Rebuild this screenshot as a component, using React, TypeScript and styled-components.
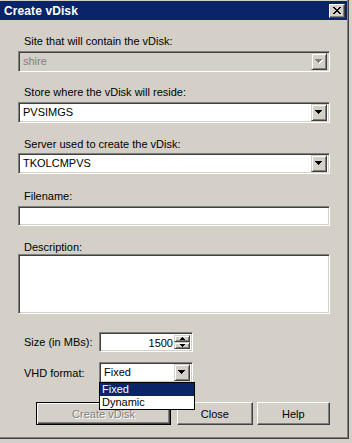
import { FC, ReactNode } from "react";
import styled, { createGlobalStyle, css } from "styled-components";

const face = "#d4d0c8";
const shadow = "#808080";
const dark = "#404040";
const navy = "#0a246a";

const GlobalStyle = createGlobalStyle`
  html, body {
    margin: 0;
    padding: 0;
    background: ${face};
  }

  body {
    font-family: "Liberation Sans", Arial, sans-serif;
    font-size: 11px;
    color: #000;
  }
`;

const raised = css`
  box-sizing: border-box;
  background: ${face};
  border: 1px solid;
  border-color: #fff ${dark} ${dark} #fff;
  box-shadow: inset -1px -1px ${shadow};
`;

const sunken = css`
  box-sizing: border-box;
  border: 1px solid;
  border-color: ${shadow} #fff #fff ${shadow};
  box-shadow: inset 1px 1px ${dark}, inset -1px -1px ${face};
`;

const Window = styled.div`
  box-sizing: border-box;
  width: 349px;
  height: 439px;
  padding: 1px 1px 0 0;
  border-right: 1px solid ${dark};
  border-bottom: 1px solid ${dark};
  box-shadow: inset -1px -1px ${shadow};
  display: flex;
  flex-direction: column;
`;

const TitleBar = styled.div`
  height: 19px;
  background: ${navy};
  display: flex;
  align-items: center;
  justify-content: space-between;
  padding: 0 2px 0 4px;

  & .caption {
    color: #fff;
    font-weight: bold;
    font-size: 12px;
    letter-spacing: 0.1px;
  }
`;

const CloseBox = styled.div`
  ${raised};
  width: 16px;
  height: 14px;
  display: flex;
  align-items: center;
  justify-content: center;
`;

const Body = styled.div`
  display: flex;
  flex-direction: column;
  padding: 0 17px 0 18px;
  position: relative;
`;

const Group = styled.div<{ $top: number; $gap: number }>`
  display: flex;
  flex-direction: column;
  margin-top: ${(p) => p.$top}px;

  & > label {
    line-height: 13px;
    padding-left: 6px;
    margin-bottom: ${(p) => p.$gap}px;
  }
`;

const ComboBox = styled.div<{ $disabled?: boolean; $width?: number }>`
  ${sunken};
  position: relative;
  width: ${(p) => (p.$width ? `${p.$width}px` : "100%")};
  height: 21px;
  padding: 2px;
  display: flex;
  align-items: center;
  background: ${(p) => (p.$disabled ? face : "#fff")};
  color: ${(p) => (p.$disabled ? shadow : "#000")};

  & .value {
    flex: 1;
    padding-left: 2px;
    line-height: 17px;
  }
`;

const DropButton = styled.div`
  box-sizing: border-box;
  width: 16px;
  height: 17px;
  background: ${face};
  border: 1px solid;
  border-color: ${face} ${dark} ${dark} ${face};
  box-shadow: inset 1px 1px #fff, inset -1px -1px ${shadow};
  display: flex;
  align-items: center;
  justify-content: center;
`;

const TextBox = styled.div<{ $height: number }>`
  ${sunken};
  height: ${(p) => p.$height}px;
  background: #fff;
`;

const Row = styled.div<{ $top: number }>`
  display: flex;
  align-items: center;
  margin-top: ${(p) => p.$top}px;

  & > label {
    width: 75px;
    padding-left: 6px;
  }
`;

const SpinBox = styled.div`
  ${sunken};
  width: 94px;
  height: 20px;
  padding: 2px;
  background: #fff;
  display: flex;

  & .value {
    flex: 1;
    text-align: right;
    line-height: 16px;
    padding-right: 1px;
  }
`;

const SpinButtons = styled.div`
  display: flex;
  flex-direction: column;
  width: 16px;
`;

const SpinHalf = styled.div`
  box-sizing: border-box;
  height: 8px;
  background: ${face};
  border: 1px solid;
  border-color: ${face} ${dark} ${dark} ${face};
  box-shadow: inset 1px 1px #fff, inset -1px -1px ${shadow};
  display: flex;
  align-items: center;
  justify-content: center;
`;

const ListPopup = styled.div`
  position: absolute;
  top: 100%;
  left: -1px;
  width: 96px;
  box-sizing: border-box;
  border: 1px solid #000;
  background: #fff;
  z-index: 2;
`;

const ListItem = styled.div<{ $selected?: boolean }>`
  height: 13px;
  line-height: 13px;
  padding-left: 2px;
  background: ${(p) => (p.$selected ? navy : "#fff")};
  color: ${(p) => (p.$selected ? "#fff" : "#000")};
`;

const ButtonRow = styled.div`
  display: flex;
  margin-top: 19px;
  padding-left: 18px;
`;

const PushButton = styled.div<{
  $width: number;
  $left?: number;
  $default?: boolean;
  $disabled?: boolean;
}>`
  ${raised};
  width: ${(p) => p.$width}px;
  margin-left: ${(p) => p.$left ?? 0}px;
  height: 23px;
  display: flex;
  align-items: center;
  justify-content: center;
  color: ${(p) => (p.$disabled ? shadow : "#000")};
  text-shadow: ${(p) => (p.$disabled ? "1px 1px #fff" : "none")};

  ${(p) =>
    p.$default &&
    css`
      border: 1px solid #000;
      box-shadow: inset 1px 1px #fff, inset -1px -1px ${dark}, inset -2px -2px ${shadow};
    `}
`;

const Arrow: FC<{ disabled?: boolean }> = ({ disabled }) => (
  <svg width="8" height="5" viewBox="0 0 8 5" shapeRendering="crispEdges">
    {disabled && <polygon points="1,1 8,1 4.5,5" fill="#fff" />}
    <polygon points="0,0 7,0 3.5,4" fill={disabled ? shadow : "#000"} />
  </svg>
);

const SmallArrow: FC<{ up?: boolean }> = ({ up }) => (
  <svg width="5" height="3" viewBox="0 0 5 3" shapeRendering="crispEdges">
    <polygon points={up ? "2.5,0 5,3 0,3" : "0,0 5,0 2.5,3"} fill="#000" />
  </svg>
);

const Combo: FC<{ value: string; disabled?: boolean; width?: number; children?: ReactNode }> = ({
  value,
  disabled,
  width,
  children,
}) => (
  <ComboBox $disabled={disabled} $width={width}>
    <span className="value">{value}</span>
    <DropButton>
      <Arrow disabled={disabled} />
    </DropButton>
    {children}
  </ComboBox>
);

const App: FC = () => {
  return (
    <>
      <GlobalStyle />
      <Window>
        <TitleBar>
          <span className="caption">Create vDisk</span>
          <CloseBox>
            <svg width="8" height="7" viewBox="0 0 8 7" shapeRendering="crispEdges">
              <path d="M0 0h2v1h-2zM6 0h2v1h-2zM1 1h2v1h-2zM5 1h2v1h-2zM2 2h4v1h-4zM3 3h2v1h-2zM2 4h4v1h-4zM1 5h2v1h-2zM5 5h2v1h-2zM0 6h2v1h-2zM6 6h2v1h-2z" fill="#000" />
            </svg>
          </CloseBox>
        </TitleBar>

        <Body>
          <Group $top={15} $gap={3}>
            <label>Site that will contain the vDisk:</label>
            <Combo value="shire" disabled />
          </Group>

          <Group $top={14} $gap={3}>
            <label>Store where the vDisk will reside:</label>
            <Combo value="PVSIMGS" />
          </Group>

          <Group $top={15} $gap={2}>
            <label>Server used to create the vDisk:</label>
            <Combo value="TKOLCMPVS" />
          </Group>

          <Group $top={16} $gap={3}>
            <label>Filename:</label>
            <TextBox $height={20} />
          </Group>

          <Group $top={15} $gap={0}>
            <label>Description:</label>
            <TextBox $height={60} />
          </Group>

          <Row $top={18}>
            <label>Size (in MBs):</label>
            <SpinBox>
              <span className="value">1500</span>
              <SpinButtons>
                <SpinHalf>
                  <SmallArrow up />
                </SpinHalf>
                <SpinHalf>
                  <SmallArrow />
                </SpinHalf>
              </SpinButtons>
            </SpinBox>
          </Row>

          <Row $top={10}>
            <label>VHD format:</label>
            <Combo value="Fixed" width={94}>
              <ListPopup>
                <ListItem $selected>Fixed</ListItem>
                <ListItem>Dynamic</ListItem>
              </ListPopup>
            </Combo>
          </Row>

          <ButtonRow>
            <PushButton $width={138} $default $disabled>
              Create vDisk
            </PushButton>
            <PushButton $width={77} $left={6}>
              Close
            </PushButton>
            <PushButton $width={75} $left={4}>
              Help
            </PushButton>
          </ButtonRow>
        </Body>
      </Window>
    </>
  );
};

export default App;
